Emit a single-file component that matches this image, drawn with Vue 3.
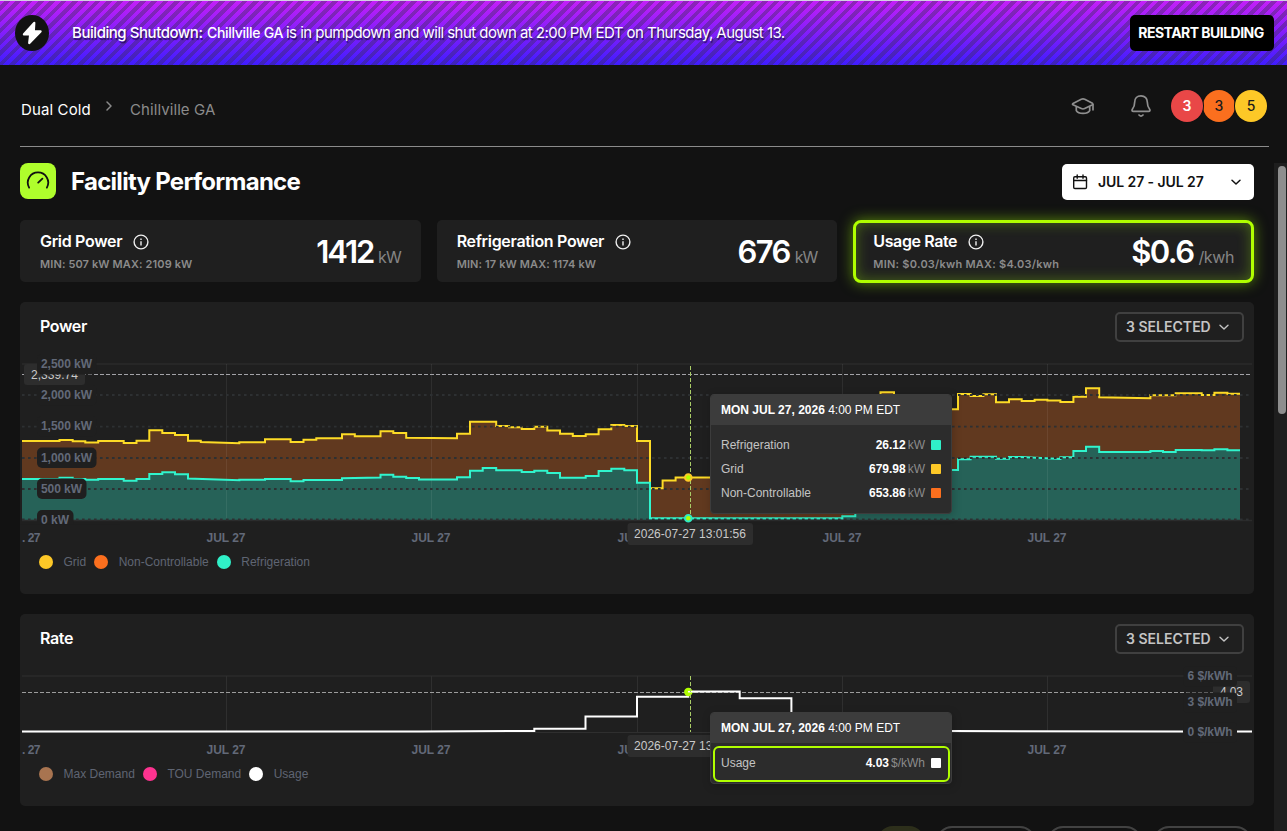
<script setup>
import { computed } from 'vue'

const cards = [
    { title: 'Grid Power', range: 'MIN: 507 kW MAX: 2109 kW', value: '1412', unit: 'kW', cls: 'grid' },
    { title: 'Refrigeration Power', range: 'MIN: 17 kW MAX: 1174 kW', value: '676', unit: 'kW', cls: 'refrigeration' },
    { title: 'Usage Rate', range: 'MIN: $0.03/kwh MAX: $4.03/kwh', value: '$0.6', unit: '/kwh', cls: 'usage', highlighted: true }
]

const powerLegend = [
    { label: 'Grid', cls: 'yellow' },
    { label: 'Non-Controllable', cls: 'orange' },
    { label: 'Refrigeration', cls: 'teal' }
]

const rateLegend = [
    { label: 'Max Demand', cls: 'brown' },
    { label: 'TOU Demand', cls: 'pink' },
    { label: 'Usage', cls: 'white' }
]

const powerRows = [
    { label: 'Refrigeration', value: '26.12', unit: 'kW', cls: 'teal' },
    { label: 'Grid', value: '679.98', unit: 'kW', cls: 'yellow' },
    { label: 'Non-Controllable', value: '653.86', unit: 'kW', cls: 'orange' }
]

// [x, y] starts a step, an optional third value is the y where the step ends
const grid = [
    [22, 441], [59.5, 440], [72.7, 441.3], [85.3, 442.5], [98.2, 441], [123.7, 443], [136.5, 440.7],
    [149.3, 430.3], [162.3, 433], [175, 435], [188, 440.7], [200.8, 442, 443.3], [239.3, 442.3],
    [265, 439.3], [290.6, 442], [303.5, 439.7], [316.3, 438.3], [342, 434.3], [354.8, 436.3],
    [380.5, 431.3], [393.3, 433], [406.2, 437.7, 438.3], [457, 433.7], [470, 421.7], [496.2, 426],
    [509, 427.3], [521.7, 429], [534.3, 426.7], [547.3, 430.5], [560, 433.7], [572.8, 436],
    [585.7, 434.3], [598.6, 429.3], [611.3, 425], [624.3, 426], [637, 441], [650, 488.3],
    [662.6, 480.5], [675.6, 477.5], [855, 420], [880.5, 392.3], [894, 409.3], [958, 394],
    [970.6, 396], [983.4, 394.3], [996, 402.3], [1009, 399.3], [1021.7, 401], [1034.6, 399.7],
    [1047.4, 400.5], [1060.4, 402], [1073.4, 396.7], [1086, 388.3], [1099.2, 397.2, 398.3],
    [1150.4, 395.3], [1175.7, 393.3], [1201.7, 395], [1214.4, 392.7], [1227.4, 393.8], [1240, 393.8]
]

const refrigeration = [
    [22, 479], [59.5, 477.7], [72.7, 479], [85.3, 479.7], [98.2, 479], [123.7, 480.7], [136.5, 479],
    [149.3, 474], [162.3, 472.3], [175, 474.3], [188, 478.5, 480.3], [239.3, 479.7], [265, 479],
    [290.6, 481.3], [303.5, 480], [342, 478.3, 477.5], [380.5, 474.7], [393.3, 476.7],
    [406.2, 478], [419, 479.5], [457, 477.3], [470, 470.7], [482.7, 468], [496.2, 470.3],
    [521.7, 472], [534.3, 470.7], [547.3, 473], [560, 477.7], [585.7, 476], [598.6, 471],
    [611.3, 468.7], [624.3, 470.3], [637, 482.7], [650, 518.3], [842.3, 516.3], [855.3, 470],
    [958, 459.3], [970.6, 456.7], [996, 458.7], [1009, 457], [1021.7, 457, 459], [1060.4, 457.3],
    [1073.4, 451], [1086, 446.7], [1099.2, 452], [1150.4, 451], [1163, 452], [1175.7, 450],
    [1201.7, 450.3], [1214.4, 449.3], [1227.4, 450.3], [1240, 450.3]
]

const usage = [
    [22, 731.5], [420, 731.5, 731], [534.3, 728.7], [585.5, 716.6], [637, 696.7], [688.3, 691.5],
    [739.7, 698.3], [791.4, 731], [952, 731, 731.5], [1183, 731.5]
]

const stepPath = (points) => {
    let d = `M${points[0][0]} ${points[0][1]}`
    for (let i = 1; i < points.length; i++) {
        const [x, y] = points[i]
        const prev = points[i - 1]
        d += ` L${x} ${prev[2] ?? prev[1]} V${y}`
    }
    return d
}

const gridLine = computed(() => stepPath(grid))
const gridArea = computed(() => `${stepPath(grid)} V520 H22 Z`)
const refrigerationLine = computed(() => stepPath(refrigeration))
const refrigerationArea = computed(() => `${stepPath(refrigeration)} V520 H22 Z`)
const usageLine = computed(() => stepPath(usage))

const ticks = [226.5, 431.5, 637.5, 842.5, 1047.5]
const rows = [395, 426.7, 458, 489, 519.5]

const powerLabels = [
    { text: '2,500 kW', y: 364, w: 51 },
    { text: '2,000 kW', y: 395, w: 51 },
    { text: '1,500 kW', y: 426, w: 51 },
    { text: '1,000 kW', y: 457.5, w: 51 },
    { text: '500 kW', y: 488.5, w: 41 },
    { text: '0 kW', y: 520, w: 28 }
]
const rateLabels = [
    { text: '6 $/kWh', y: 676 },
    { text: '3 $/kWh', y: 702 },
    { text: '0 $/kWh', y: 732 }
]
</script>

<template>
    <div class="app">
        <div class="banner">
            <span class="bolt">
                <svg width="34" height="36" viewBox="0 0 34 36">
                    <path d="M19.2 8 L9 19.3 H15.3 L14.3 28 L25.5 16.4 H18.7 Z" fill="#fff" stroke="#fff" stroke-width="2.4" stroke-linejoin="round" />
                </svg>
            </span>
            <p class="banner-text">
                <span class="lead">Building Shutdown:</span>
                <span class="site">Chillville GA</span>
                <span class="rest">is in pumpdown and will shut down at 2:00 PM EDT on Thursday, August 13.</span>
            </p>
            <button class="restart"><span>RESTART BUILDING</span></button>
        </div>

        <header class="header">
            <nav class="breadcrumb">
                <span class="root">Dual Cold</span>
                <svg width="8" height="12" viewBox="0 0 8 12" fill="none" stroke="#8b8b8b" stroke-width="1.5" stroke-linecap="round" stroke-linejoin="round">
                    <path d="M2 2 L6 6 L2 10" />
                </svg>
                <span class="current">Chillville GA</span>
            </nav>
            <div class="actions">
                <svg class="cap" width="24" height="24" viewBox="0 0 24 24" fill="none" stroke="#8f8f8f" stroke-width="1.7" stroke-linecap="round" stroke-linejoin="round">
                    <path d="M2 10.8 Q1 10.2 2 9.5 L10.3 5.3 Q12 4.5 13.7 5.3 L21 9.1 Q22.6 10 21 11 L13.7 14.6 Q12 15.4 10.3 14.6 Z" />
                    <path d="M22 10.5 V15.8 M5.3 12.8 V16.6 C7.5 20.4 16.5 20.4 18.7 16.6 V12.8" />
                </svg>
                <svg class="bell" width="24" height="24" viewBox="0 0 24 24" fill="none" stroke="#8f8f8f" stroke-width="1.7" stroke-linecap="round" stroke-linejoin="round">
                    <path d="M12 1.8 C8 1.8 5.7 4.5 5.7 8 C5.7 11.7 5 13 3.5 15 C2.6 16.3 2.9 17.3 4.4 17.3 H19.6 C21.1 17.3 21.4 16.3 20.5 15 C19 13 18.3 11.7 18.3 8 C18.3 4.5 16 1.8 12 1.8 Z" />
                    <path d="M10 21 Q12 23 14 21" />
                </svg>
                <div class="badges">
                    <span class="badge critical">3</span>
                    <span class="badge major">3</span>
                    <span class="badge minor">5</span>
                </div>
            </div>
        </header>

        <main class="content">
            <div class="scrollbar"><div class="thumb"></div></div>
            <div class="title-row">
                <span class="gauge">
                    <svg width="24" height="24" viewBox="0 0 24 24" fill="none" stroke="#111" stroke-width="1.8" stroke-linecap="round">
                        <path d="M3.1 18.6 A10.2 10.2 0 1 1 20.9 18.6 M12.2 13.6 L16.4 9.6" />
                    </svg>
                </span>
                <h1>Facility Performance</h1>
                <button class="date-picker">
                    <svg width="16" height="16" viewBox="0 0 16 16" fill="none" stroke="#111" stroke-width="1.4" stroke-linecap="round" stroke-linejoin="round">
                        <rect x="1.7" y="2.7" width="12.8" height="11.8" rx="1.2" />
                        <path d="M1.7 6.5 H14.5 M5.2 1 V4.2 M11 1 V4.2" />
                    </svg>
                    <span>JUL 27 - JUL 27</span>
                    <svg class="chevron" width="12" height="12" viewBox="0 0 12 12" fill="none" stroke="#111" stroke-width="1.5" stroke-linecap="round" stroke-linejoin="round">
                        <path d="M2 4.2 L6 8 L10 4.2" />
                    </svg>
                </button>
            </div>

            <div class="cards">
                <div v-for="card in cards" :key="card.title" class="card" :class="[card.cls, { highlighted: card.highlighted }]">
                    <div class="card-info">
                        <div class="card-title">
                            <span>{{ card.title }}</span>
                            <svg width="16" height="16" viewBox="0 0 16 16" fill="none" stroke="#f0f0f0" stroke-width="1.4">
                                <circle cx="8" cy="8" r="6.9" />
                                <path d="M8 7.2 V11.6 M8 4.6 V6.1" />
                            </svg>
                        </div>
                        <div class="card-range">{{ card.range }}</div>
                    </div>
                    <div class="card-value"><b>{{ card.value }}</b><span>{{ card.unit }}</span></div>
                </div>
            </div>

            <section class="panel power">
                <div class="panel-head">
                    <h2>Power</h2>
                    <button class="select">
                        <span>3 SELECTED</span>
                        <svg width="12" height="12" viewBox="0 0 12 12" fill="none" stroke="#c4c4c4" stroke-width="1.4" stroke-linecap="round" stroke-linejoin="round">
                            <path d="M2 4.2 L6 8 L10 4.2" />
                        </svg>
                    </button>
                </div>
                <svg class="chart" width="1234" height="200" viewBox="20 350 1234 200">
                    <path :d="gridArea" fill="#61391f" />
                    <path :d="refrigerationArea" fill="#266258" />
                    <path d="M22 364 H1252 M22 520.5 H1252" stroke="#2b2b2b" stroke-width="1.6" />
                    <path v-for="x in ticks" :key="x" :d="`M${x} 364 V520`" stroke="#fff" stroke-opacity="0.07" />
                    <path :d="gridLine" class="line" stroke="#fddb26" />
                    <path :d="refrigerationLine" class="line" stroke="#30f5cd" />
                    <path v-for="y in rows" :key="y" :d="`M22 ${y} H1252`" stroke="#2d3032" stroke-width="1.8" stroke-dasharray="2.6 3.4" />
                    <path d="M22 374.5 H1252" stroke="#a3a3a8" stroke-dasharray="4 2" />
                    <path d="M690.5 366 V520" stroke="#a9cc66" stroke-dasharray="4 2" />
                    <circle cx="688.3" cy="477.5" r="3.3" fill="#b0ff00" stroke="#fdc827" stroke-width="2" />
                    <circle cx="688.3" cy="518.3" r="3.3" fill="#b0ff00" stroke="#30e8c3" stroke-width="2" />
                    <rect x="24" y="364" width="61" height="21" rx="3" fill="#2d2d2d" />
                    <text x="31" y="378.5" textLength="47" class="pointer-text">2,339.74</text>
                    <g v-for="label in powerLabels" :key="label.text">
                        <rect x="37" :y="label.y - 10" :width="label.w + 8.5" height="20.5" rx="5" fill="#1f1f1f" />
                        <text x="41" :y="label.y + 4" :textLength="label.w" class="axis">{{ label.text }}</text>
                    </g>
                    <rect x="20" y="524.5" width="100" height="26" fill="#1f1f1f" />
                    <text x="22" y="542" textLength="18.5" class="axis">. 27</text>
                    <text v-for="x in ticks" :key="x" :x="x - 20" y="542" textLength="39" class="axis">JUL 27</text>
                    <rect x="627.5" y="523" width="125.5" height="22" rx="3" fill="#2d2d2d" />
                    <text x="634" y="538" textLength="112" class="pointer-text">2026-07-27 13:01:56</text>
                </svg>
                <ul class="legend">
                    <li v-for="item in powerLegend" :key="item.label"><i :class="item.cls"></i>{{ item.label }}</li>
                </ul>
                <div class="tooltip">
                    <div class="tooltip-head"><b>MON JUL 27, 2026</b> 4:00 PM EDT</div>
                    <div class="tooltip-body">
                        <div v-for="row in powerRows" :key="row.label" class="tooltip-row">
                            <span>{{ row.label }}</span>
                            <b>{{ row.value }}</b>
                            <em>{{ row.unit }}</em>
                            <i :class="row.cls"></i>
                        </div>
                    </div>
                </div>
            </section>

            <section class="panel rate">
                <div class="panel-head">
                    <h2>Rate</h2>
                    <button class="select">
                        <span>3 SELECTED</span>
                        <svg width="12" height="12" viewBox="0 0 12 12" fill="none" stroke="#c4c4c4" stroke-width="1.4" stroke-linecap="round" stroke-linejoin="round">
                            <path d="M2 4.2 L6 8 L10 4.2" />
                        </svg>
                    </button>
                </div>
                <svg class="chart" width="1234" height="100" viewBox="20 662 1234 100">
                    <path d="M22 676 H1252" stroke="#272727" stroke-width="2" />
                    <path d="M22 732.5 H1252" stroke="#2f2f2f" />
                    <path v-for="x in ticks" :key="x" :d="`M${x} 676 V732`" stroke="#2f2f2f" />
                    <path d="M22 692.5 H1252" stroke="#9c9c9c" stroke-dasharray="4 2" />
                    <path :d="usageLine" class="line" stroke="#fff" />
                    <path d="M1237 731.5 H1252" class="line" stroke="#fff" />
                    <circle cx="688.3" cy="692" r="4.2" fill="#b0ff00" />
                    <path d="M688 691.7 H694" stroke="#fff" stroke-width="1.5" />
                    <rect x="1213" y="681" width="37" height="22" rx="3" fill="#2d2d2d" />
                    <text x="1220" y="696" textLength="23" class="pointer-text">4.03</text>
                    <g v-for="label in rateLabels" :key="label.text">
                        <rect x="1183.5" :y="label.y - 9.5" width="53.5" height="20" rx="4" fill="#1f1f1f" />
                        <text x="1187.5" :y="label.y + 4" textLength="45" class="axis">{{ label.text }}</text>
                    </g>
                    <text x="22" y="754" textLength="18.5" class="axis">. 27</text>
                    <text v-for="x in ticks" :key="x" :x="x - 20" y="754" textLength="39" class="axis">JUL 27</text>
                    <rect x="627.5" y="735" width="125.5" height="22" rx="3" fill="#2d2d2d" />
                    <text x="634" y="750" textLength="112" class="pointer-text">2026-07-27 13:01:56</text>
                    <path d="M690.5 676 V732" stroke="#a9cc66" stroke-dasharray="4 2" />
                </svg>
                <ul class="legend">
                    <li v-for="item in rateLegend" :key="item.label"><i :class="item.cls"></i>{{ item.label }}</li>
                </ul>
                <div class="tooltip">
                    <div class="tooltip-head"><b>MON JUL 27, 2026</b> 4:00 PM EDT</div>
                    <div class="tooltip-row active">
                        <span>Usage</span>
                        <b>4.03</b>
                        <em>$/kWh</em>
                        <i class="white"></i>
                    </div>
                </div>
            </section>

            <div class="pills">
                <span class="pill selected"></span>
                <span class="pill second"></span>
                <span class="pill third"></span>
                <span class="pill fourth"></span>
            </div>
        </main>
    </div>
</template>

<style>
html,
body {
    background: #121212;
    overflow: hidden;
}
</style>

<style scoped>
.app {
    width: 1287px;
    height: 831px;
    display: flex;
    flex-direction: column;
    overflow: hidden;
    background: #121212;
    color: #fff;
    font-family: 'Inter', 'Liberation Sans', sans-serif;
}

h1,
h2,
p,
ul {
    margin: 0;
    padding: 0;
}

button {
    border: 0;
    padding: 0;
    font-family: inherit;
}

svg {
    display: block;
    flex-shrink: 0;
}

.banner {
    box-sizing: border-box;
    height: 65px;
    flex-shrink: 0;
    display: flex;
    align-items: center;
    padding: 0 13px 0 15px;
    border-top: 1px solid #d3cfe3;
    background: repeating-linear-gradient(-45deg, transparent 0 4px, rgba(55, 45, 80, 0.38) 4px 8px), linear-gradient(#c41ff8, #3f1cff);
}

.bolt {
    width: 34px;
    height: 36px;
    border-radius: 50%;
    background: #121212;
}

.banner-text {
    flex: 1;
    margin-left: 23px;
    display: flex;
    align-items: center;
    font-size: 15px;
    line-height: 20px;
    white-space: nowrap;
    text-shadow: 1px 2px 1px rgba(20, 10, 60, 0.75);
}

.lead {
    width: 135px;
    font-weight: 500;
    letter-spacing: -0.45px;
}

.site {
    width: 79px;
    font-size: 14px;
    font-weight: 500;
    letter-spacing: -0.3px;
    text-shadow: none;
}

.rest {
    letter-spacing: -0.54px;
}

.restart {
    width: 144px;
    height: 36px;
    padding: 0 2px 2px 0;
    border-radius: 5px;
    background: #000;
    color: #fff;
    font-size: 14px;
    font-weight: 700;
    letter-spacing: -0.53px;
}

.header {
    box-sizing: border-box;
    height: 82px;
    flex-shrink: 0;
    margin: 0 18px 0 20px;
    display: flex;
    justify-content: space-between;
    border-bottom: 1px solid #8b8b8b;
}

.breadcrumb {
    display: flex;
    align-items: center;
    height: 88px;
    font-size: 15px;
    letter-spacing: 0.12px;
}

.breadcrumb .root {
    width: 84px;
    padding-left: 1px;
}

.breadcrumb svg {
    margin-bottom: 6px;
}

.breadcrumb .current {
    margin-left: 17px;
    color: #8b8b8b;
    letter-spacing: 0.08px;
}

.actions {
    display: flex;
    align-items: center;
    height: 82px;
}

.cap {
    margin-right: 34px;
}

.bell {
    margin-right: 18px;
}

.badges {
    display: flex;
    padding-right: 2px;
}

.badge {
    width: 32px;
    height: 32px;
    border-radius: 50%;
    text-align: center;
    line-height: 32px;
    font-size: 14px;
    font-weight: 500;
    color: #1b1b1b;
    box-shadow: 0 0 0 1px #121212;
}

.badge.critical {
    position: relative;
    background: #e94747;
    color: #fff;
    font-weight: 600;
}

.badge.major {
    background: #fb6f1e;
}

.badge.minor {
    background: #fdc827;
}

.content {
    position: relative;
    box-sizing: border-box;
    flex: 1;
    margin-top: 16px;
    padding: 0 33px 0 20px;
    overflow: hidden;
}

.scrollbar {
    position: absolute;
    top: 0;
    right: 0;
    width: 13px;
    height: 100%;
    background: #1e1e1e;
}

.thumb {
    width: 8px;
    height: 248px;
    margin: 3px 0 0 4px;
    border-radius: 4px;
    background: #8e8e8e;
}

.title-row {
    display: flex;
    align-items: center;
    height: 37px;
}

.gauge {
    width: 36px;
    height: 36px;
    margin-bottom: 1px;
    display: flex;
    align-items: center;
    justify-content: center;
    border-radius: 8px;
    background: #affe2c;
}

h1 {
    flex: 1;
    margin-left: 15px;
    font-size: 24px;
    line-height: 32px;
    font-weight: 700;
    letter-spacing: -0.72px;
}

.date-picker {
    box-sizing: border-box;
    width: 192px;
    height: 36px;
    margin-top: 1px;
    padding: 0 12px 0 10px;
    display: flex;
    align-items: center;
    border-radius: 5px;
    background: #fff;
    color: #111;
    font-size: 14px;
    font-weight: 600;
    letter-spacing: -0.08px;
}

.date-picker span {
    margin: 0 0 1px 10px;
}

.chevron {
    margin-left: auto;
}

.cards {
    display: grid;
    grid-template-columns: repeat(3, 1fr);
    gap: 16px;
    margin-top: 20px;
}

.card {
    box-sizing: border-box;
    height: 62px;
    padding: 0 20px;
    display: flex;
    justify-content: space-between;
    border-radius: 5px;
    background: #1f1f1f;
}

.card.highlighted {
    height: 63px;
    padding: 0 17px 0 17px;
    margin-bottom: -1px;
    border: 3px solid #b0ff00;
    border-radius: 8px;
    box-shadow: 0 0 14px rgba(160, 255, 0, 0.5), inset 0 0 14px rgba(160, 255, 0, 0.32);
}

.card-info {
    padding-top: 11px;
}

.card-title {
    display: flex;
    align-items: center;
    gap: 11px;
    height: 22px;
    font-size: 16px;
    font-weight: 600;
    letter-spacing: -0.32px;
}

.card-title span {
    margin-bottom: 2px;
}

.card-range {
    margin-top: 3px;
    font-size: 11px;
    line-height: 16px;
    font-weight: 600;
    color: #8b8b8b;
    letter-spacing: 0.12px;
}

.usage .card-title {
    letter-spacing: -0.4px;
}

.usage .card-range {
    letter-spacing: 0.24px;
}

.card-value {
    display: flex;
    align-items: baseline;
    gap: 5px;
    padding-top: 13px;
}

.card-value b {
    font-size: 31px;
    line-height: 38px;
    font-weight: 600;
    letter-spacing: -1.6px;
}

.card-value span {
    font-size: 16px;
    color: #858585;
    letter-spacing: -0.4px;
}

.grid .card-value b {
    letter-spacing: -2.1px;
}

.grid .card-value span,
.refrigeration .card-value span {
    letter-spacing: -1px;
}

.highlighted .card-info {
    padding-top: 8px;
}

.highlighted .card-value {
    padding-top: 10px;
}

.panel {
    position: relative;
    margin-top: 20px;
    border-radius: 5px;
    background: #1f1f1f;
}

.power {
    height: 292px;
}

.rate {
    height: 192px;
}

.panel-head {
    box-sizing: border-box;
    height: 48px;
    padding: 10px 10px 0 20px;
    display: flex;
    justify-content: space-between;
    align-items: flex-start;
}

h2 {
    font-size: 16px;
    line-height: 28px;
    font-weight: 600;
    letter-spacing: -0.35px;
}

.select {
    box-sizing: border-box;
    width: 129px;
    height: 30px;
    padding: 0 12px 0 9px;
    display: flex;
    align-items: center;
    justify-content: space-between;
    border: 2px solid #404040;
    border-radius: 5px;
    background: transparent;
    color: #c4c4c4;
    font-size: 14px;
    font-weight: 600;
    letter-spacing: 0.02px;
}

.select span {
    margin-bottom: 1px;
}

.line {
    fill: none;
    stroke-width: 2;
}

.axis {
    font: bold 12px 'Liberation Sans', sans-serif;
    fill: #626978;
}

.pointer-text {
    font: 12px 'Liberation Sans', sans-serif;
    fill: #cacaca;
}

.legend {
    display: flex;
    gap: 8px;
    padding-left: 19px;
    margin-top: 4px;
    list-style: none;
    font: 12px/16px 'Liberation Sans', sans-serif;
    color: #5f6573;
}

.legend li {
    display: flex;
    align-items: center;
}

.legend i {
    width: 14px;
    height: 14px;
    margin-right: 10.5px;
    border-radius: 50%;
}

.tooltip {
    position: absolute;
    top: 92px;
    left: 690px;
    box-sizing: border-box;
    width: 242px;
    height: 120px;
    border: 1px solid #3c3c3c;
    border-radius: 4px;
    background: #2c2c2c;
    box-shadow: 1px 2px 10px rgba(0, 0, 0, 0.2);
    font: 12px/24px 'Liberation Sans', sans-serif;
    color: #c4c4c4;
}

.rate .tooltip {
    top: 98px;
    height: 72px;
}

.tooltip-head {
    height: 30px;
    padding-left: 10px;
    line-height: 30px;
    border-radius: 3px 3px 0 0;
    background: #3c3c3c;
    color: #fff;
}

.tooltip-body {
    padding: 8px 10px;
}

.tooltip-row {
    display: flex;
    align-items: center;
}

.tooltip-row span {
    flex: 1;
}

.tooltip-row b {
    color: #fff;
}

.tooltip-row em {
    margin-left: 2px;
    font-style: normal;
    color: #8b8b8b;
}

.tooltip-row i {
    width: 10px;
    height: 10px;
    margin-left: 6px;
    border-radius: 1px;
}

.tooltip-row.active {
    box-sizing: border-box;
    height: 36px;
    margin: 3px 1px 0 2px;
    padding: 0 7px 3px 6px;
    border: 2px solid #b0ff00;
    border-radius: 6px;
}

.yellow {
    background: #fdc827;
}

.orange {
    background: #fb6f1e;
}

.teal {
    background: #30f0c8;
}

.brown {
    background: #a87450;
}

.pink {
    background: #fd3390;
}

.white {
    background: #fff;
}

.pills {
    display: flex;
    justify-content: flex-end;
    gap: 11px;
    margin: 20px 2px 0 0;
}

.pill {
    box-sizing: border-box;
    height: 32px;
    border: 2px solid #424242;
    border-radius: 16px;
}

.pill.selected {
    width: 48px;
    border-color: #2d2f1b;
    background: #2d2f1b;
}

.pill.second {
    width: 100px;
}

.pill.third {
    width: 95px;
}

.pill.fourth {
    width: 99px;
}
</style>
